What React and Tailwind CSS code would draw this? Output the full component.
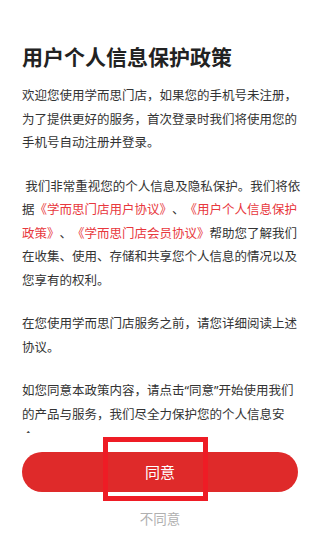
import React from "react";

const FONT = { fontFamily: '"Noto Sans", "Noto Sans CJK SC", sans-serif' };

const Link = ({ children }) => <span className="text-[#e8383d]">{children}</span>;

export default function App() {
  return (
    <div className="relative flex h-[549px] w-[320px] flex-col bg-white [text-spacing-trim:space-all]" style={FONT}>
      <div className="h-[433px] overflow-hidden pl-[22px] pr-[18px] pt-[42px]">
        <h1 className="text-[21px] font-bold leading-[30px] text-[#222]">用户个人信息保护政策</h1>

        <div className="mt-[12px] space-y-[20px] text-[12.5px] leading-[23.5px] text-[#333]">
          <p>欢迎您使用学而思门店，如果您的手机号未注册，为了提供更好的服务，首次登录时我们将使用您的手机号自动注册并登录。</p>
          <p>
            {"\u00a0"}我们非常重视您的个人信息及隐私保护。我们将依据
            <Link>《学而思门店用户协议》</Link>、<Link>《用户个人信息保护政策》</Link>、
            <Link>《学而思门店会员协议》</Link>帮助您了解我们在收集、使用、存储和共享您个人信息的情况以及您享有的权利。
          </p>
          <p>在您使用学而思门店服务之前，请您详细阅读上述协议。</p>
          <p>如您同意本政策内容，请点击“同意”开始使用我们的产品与服务，我们尽全力保护您的个人信息安全。</p>
        </div>
      </div>

      <div className="flex flex-col items-center px-[22px] pt-[19px]">
        <button className="h-[40px] w-full rounded-full bg-[#df2a2a] text-[15px] text-white">同意</button>
        <button className="mt-[17px] text-[13.5px] leading-[20px] text-[#b0b0b0]">不同意</button>
      </div>

      <div className="pointer-events-none absolute left-[103px] top-[437px] h-[64px] w-[105px] border-[5px] border-[#ee1c25]" />
    </div>
  );
}
